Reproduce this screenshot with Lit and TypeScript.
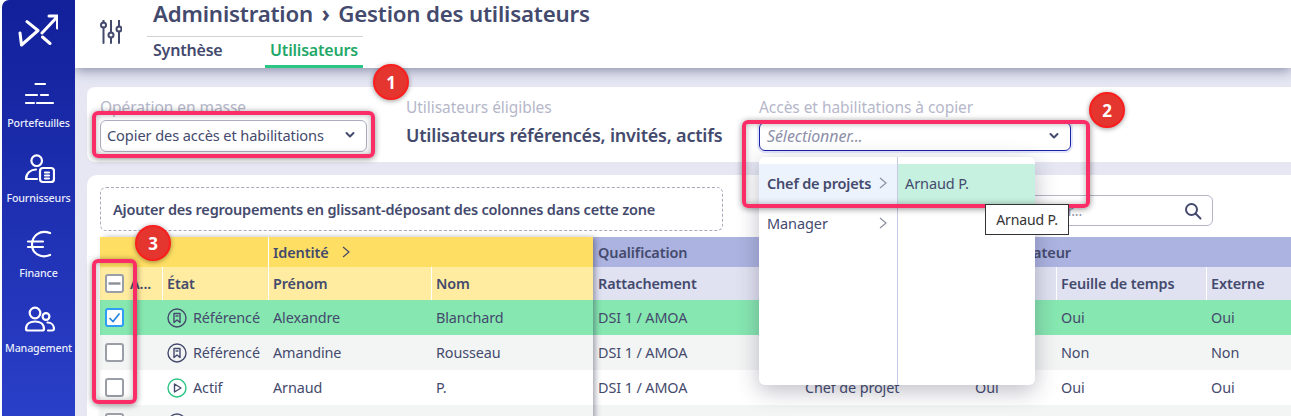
import { LitElement, html, css, svg } from "lit";
import { customElement } from "lit/decorators.js";

const navItems = [
  { label: "Portefeuilles", icon: svg`<path d="M12.5 6H22M3 17H14M18 17H25M3 25H11M14 25H30"/>` },
  { label: "Fournisseurs", icon: svg`<circle cx="13.7" cy="7.7" r="5.3"/><path d="M3 26C3 20 8 16.5 13 16.5M3 26H14"/><rect x="17" y="15" width="14" height="14" rx="3"/><path d="M22 19.5H26M22 22.5H26M22 25.5H26"/>` },
  { label: "Finance", icon: svg`<path d="M27 5C17 1 9 8 9 16.5C9 25 17 31 27 27M5 13.5H20M5 19H20"/>` },
  { label: "Management", icon: svg`<circle cx="12" cy="10" r="5.3"/><circle cx="23" cy="13.5" r="3.4"/><path d="M3 26C3 21 7 18.5 12 18.5C17 18.5 21 21 21 26C21 27 20 27.5 19 27.5H5C4 27.5 3 27 3 26Z"/><path d="M24.5 19.5C28 19.5 31 22 31 26C31 27 30 27.5 29 27.5H25"/>` },
];

type Row = { cls: string; check: "on" | "off"; state: "ref" | "act"; etat: string; prenom: string; nom: string; fn: string; a: string; f: string; e: string };
const rows: Row[] = [
  { cls: "sel", check: "on", state: "ref", etat: "Référencé", prenom: "Alexandre", nom: "Blanchard", fn: "Chef de projet", a: "Oui", f: "Oui", e: "Oui" },
  { cls: "alt", check: "off", state: "ref", etat: "Référencé", prenom: "Amandine", nom: "Rousseau", fn: "Manager", a: "Non", f: "Non", e: "Non" },
  { cls: "", check: "off", state: "act", etat: "Actif", prenom: "Arnaud", nom: "P.", fn: "Chef de projet", a: "Oui", f: "Oui", e: "Oui" },
  { cls: "alt", check: "off", state: "ref", etat: "Référencé", prenom: "Benoît", nom: "Lefèvre", fn: "Manager", a: "Oui", f: "Oui", e: "Non" },
];

const chevron = html`<svg class="chev" viewBox="0 0 12 8"><path d="M2.5 2L6 5.5L9.5 2"/></svg>`;
const gt = html`<svg class="gt" viewBox="0 0 10 14"><path d="M2 2L8 7L2 12"/></svg>`;

@customElement("app-root")
export class AppRoot extends LitElement {
  static styles = css`
    :host {
      display: block; width: 1291px; height: 416px; overflow: hidden; position: relative;
      background: #e6e7f3; color: #444a6d;
      font-family: "Noto Sans", "Liberation Sans", sans-serif; font-size: 14px; letter-spacing: -0.1px;
    }
    * { box-sizing: border-box; }
    .app { display: flex; height: 416px; background: #fff; }
    .side {
      margin-left: 2px; width: 73px; flex: none; border-top-left-radius: 7px; padding-top: 14px;
      background: linear-gradient(180deg, #12209a 0%, #2a3fc8 100%); color: #fff;
      display: flex; flex-direction: column; align-items: center; z-index: 3;
    }
    .logo { width: 40px; height: 34px; margin-bottom: 30px; flex: none; margin-left: -1px; }
    .logo svg { display: block; width: 40px; height: 34px; fill: none; stroke: #fff; stroke-width: 3; stroke-linecap: round; stroke-linejoin: round; }
    .nav { height: 75px; flex: none; display: flex; flex-direction: column; align-items: center; width: 100%; }
    .nav svg { width: 32px; height: 32px; fill: none; stroke: #fff; stroke-width: 2.2; stroke-linecap: round; stroke-linejoin: round; flex: none; }
    .nav span { font-size: 10.7px; line-height: 14px; margin-top: 6px; font-weight: 500; color: #e9ecfb; letter-spacing: -0.15px; }
    .main { flex: 1; min-width: 0; background: #e6e7f3; display: flex; flex-direction: column; }
    .head {
      height: 68px; flex: none; background: #fff; display: flex; padding-left: 25px; position: relative; z-index: 2;
      box-shadow: 0 2px 12px rgba(50, 52, 100, .55);
    }
    .sliders { width: 22px; height: 24px; margin-top: 20px; fill: none; stroke: #444a6d; stroke-width: 2; stroke-linecap: round; }
    .titles { margin-left: 25px; display: flex; flex-direction: column; width: 216px; }
    .title { font-size: 22.3px; font-weight: 600; line-height: 27px; white-space: nowrap; margin-left: 6px; height: 36px; letter-spacing: -0.2px; }
    .title i { font-style: normal; font-weight: 700; margin: 0 3px; }
    .tabs { display: flex; border-top: 1px solid #d2d2d2; height: 32px; }
    .tab { font-size: 16px; font-weight: 600; padding: 0 5px 0 6px; line-height: 27px; width: 118px; letter-spacing: -0.2px; }
    .tab.on { color: #1fa868; border-bottom: 3px solid #2bc584; width: 98px; text-align: center; padding: 0; }
    .content { flex: 1; min-height: 0; padding: 19px 0 0 12px; display: flex; flex-direction: column; gap: 13px; }
    .panel { background: #fff; border-radius: 8px 0 0 8px; padding: 0 13px; }
    .ops { height: 75px; display: grid; grid-template-columns: 306px 353px 312px; padding-top: 11px; flex: none; }
    .lab { font-size: 15.5px; line-height: 18px; color: #b5b7ca; white-space: nowrap; letter-spacing: -0.05px; }
    .sel-box {
      height: 32px; margin-top: 4px; border: 1px solid #aeb0c2; border-radius: 6px; display: flex; align-items: center;
      justify-content: space-between; padding: 0 10px 2px 6px; width: 267px; white-space: nowrap; font-size: 14.6px;
    }
    .chev { width: 12px; height: 8px; fill: none; stroke: #444a6d; stroke-width: 2; stroke-linecap: round; stroke-linejoin: round; }
    .val { font-size: 18px; font-weight: 600; line-height: 30px; margin-top: 4px; white-space: nowrap; letter-spacing: -0.2px; }
    .sel-box.focus { width: 312px; height: 29px; margin-top: 6px; border-color: #1a22a8; box-shadow: 0 0 0 2px #e4e6fa; padding-left: 7px; font-size: 16px; }
    .sel-box.focus em { color: #8d90a8; }
    .grid-panel { flex: 1; min-height: 0; padding-top: 12px; border-radius: 10px 0 0 0; }
    .bar { display: flex; justify-content: space-between; width: 1113px; height: 44px; }
    .zone { width: 623px; border: 1px dashed #a9a9bd; border-radius: 6px; display: flex; align-items: center; padding-left: 12px; font-weight: 600; white-space: nowrap; font-size: 14.5px; letter-spacing: -0.2px; }
    .search { width: 220px; height: 31px; margin-top: 8px; border: 1px solid #b4b5c8; border-radius: 6px; display: flex; align-items: center; justify-content: space-between; padding: 0 10px 0 6px; color: #8d90a8; }
    .search svg { width: 18px; height: 18px; fill: none; stroke: #444a6d; stroke-width: 2; stroke-linecap: round; }
    .table { display: flex; margin-top: 6px; width: 1192px; }
    .frozen, .rest { display: grid; flex: none; grid-template-rows: 30px 33px 35px 35px 35px 35px; }
    .frozen { grid-template-columns: 62px 106px 163px 162px; position: relative; z-index: 1; box-shadow: 3px 0 6px -1px rgba(40, 40, 70, .45); }
    .rest { grid-template-columns: 207px 170px 86px 150px 85px; }
    .c { padding: 0 5px; display: flex; align-items: center; white-space: nowrap; overflow: hidden; min-width: 0; }
    .g { font-weight: 600; font-size: 14.5px; }
    .g.y { background: #ffdf63; }
    .g.b { background: #acb3e0; }
    .g .gt { margin-left: 12px; }
    .ch { font-weight: 600; font-size: 14.4px; }
    .ch.y { background: #ffeca0; }
    .ch.b { background: #e0e2f1; }
    .sep { border-left: 1px solid #fff; padding-left: 4px; }
    .gsep { border-left: 1px solid #fff; padding-left: 4px; }
    .r { background: #fff; font-size: 14.4px; }
    .r.sel { background: #86e7b0; }
    .r.alt { background: #f3f5f4; }
    .etat { gap: 6px; }
    .st { width: 20px; height: 20px; flex: none; fill: none; stroke: #444a6d; stroke-width: 1.4; stroke-linejoin: round; }
    .st.g2 circle { stroke: #2bc584; }
    .box { width: 19px; height: 19px; border: 2px solid #9a9ea6; border-radius: 3px; background: #fff; flex: none; display: block; }
    .box svg { display: block; width: 15px; height: 15px; fill: none; stroke: #8a8e96; stroke-width: 2.4; }
    .box.on { border-color: #2f9cf5; }
    .box.on svg { stroke: #1f80e0; stroke-width: 1.6; }
    .gt { width: 10px; height: 14px; fill: none; stroke: #444a6d; stroke-width: 1.2; flex: none; }
    .menu {
      position: absolute; left: 759px; top: 157px; width: 276px; height: 228px; background: #fff; border-radius: 6px; z-index: 5;
      box-shadow: 0 6px 22px rgba(40, 40, 70, .3); display: flex; padding-top: 7px; 
    }
    .menu-l { width: 139px; border-right: 1px solid #c9cae6; margin-top: -7px; padding-top: 7px; }
    .menu-r { flex: 1; }
    .mi { height: 40px; display: flex; align-items: center; justify-content: space-between; padding: 0 9px 2px 8px; font-size: 14.5px; white-space: nowrap; }
    .mi .gt { stroke: #8d90a2; }
    .mi.on { background: #edf3fd; font-weight: 600; letter-spacing: -0.2px; }
    .mi.pick { background: #c6f0df; padding-left: 7px; }
    .tip { position: absolute; left: 985px; top: 204px; width: 84px; height: 31px; background: #fff; border: 1px solid #333; z-index: 7; color: #333; display: flex; align-items: center; justify-content: center; font-size: 14px; }
    .mark { position: absolute; border: 4px solid #fb2d66; border-radius: 6px; z-index: 6; box-shadow: 0 1px 6px rgba(0, 0, 0, .45), inset 0 0 6px rgba(0, 0, 0, .3); }
    .badge {
      position: absolute; width: 36px; height: 36px; border-radius: 50%; z-index: 6; background: #e4352f; border: 2px solid #fb1e1e;
      color: #fff; font-weight: 700; font-size: 17px; display: flex; align-items: center; justify-content: center;
      box-shadow: 0 1px 5px rgba(0, 0, 0, .4);
    }
  `;

  private cell(cls: string, content: unknown) {
    return html`<div class="c ${cls}">${content}</div>`;
  }

  private stateIcon(s: Row["state"]) {
    return s === "ref"
      ? html`<svg class="st" viewBox="0 0 20 20"><circle cx="10" cy="10" r="9"/><path d="M7 5.5H13V14.5L10 12L7 14.5Z"/><path d="M8.5 8H11.5"/></svg>`
      : html`<svg class="st g2" viewBox="0 0 20 20"><circle cx="10" cy="10" r="9"/><path d="M7.5 6L14 10L7.5 14Z"/></svg>`;
  }

  private box(kind: "on" | "off" | "mix") {
    return html`<span class="box ${kind}">
      ${kind === "on" ? html`<svg viewBox="0 0 15 15"><path d="M2.5 8L6 11.5L12.5 3.5"/></svg>` : ""}
      ${kind === "mix" ? html`<svg viewBox="0 0 15 15"><path d="M1.5 7.5H13.5"/></svg>` : ""}
    </span>`;
  }

  render() {
    return html`
      <div class="app">
        <aside class="side">
          <div class="logo"><svg viewBox="0 0 40 34"><path d="M9 7.7L20 16.5L3.5 31L2 19M24 19L39.5 2.5M31 2H39.5V14M24.5 23L32 29.5"/></svg></div>
          ${navItems.map((n) => html`<div class="nav"><svg viewBox="0 0 32 32">${n.icon}</svg><span>${n.label}</span></div>`)}
        </aside>
        <div class="main">
          <header class="head">
            <svg class="sliders" viewBox="0 0 22 24">
              <path d="M3.5 0V2.5M3.5 7.5V23M11 0V12.5M11 17.5V23M19 0V6.5M19 11.5V23"/>
              <circle cx="3.5" cy="5" r="2.5"/><circle cx="11" cy="15" r="2.5"/><circle cx="19" cy="9" r="2.5"/>
            </svg>
            <div class="titles">
              <div class="title">Administration <i>›</i> Gestion des utilisateurs</div>
              <nav class="tabs"><div class="tab">Synthèse</div><div class="tab on">Utilisateurs</div></nav>
            </div>
          </header>
          <div class="content">
            <section class="panel ops">
              <div><div class="lab">Opération en masse</div><div class="sel-box">Copier des accès et habilitations ${chevron}</div></div>
              <div><div class="lab">Utilisateurs éligibles</div><div class="val">Utilisateurs référencés, invités, actifs</div></div>
              <div><div class="lab">Accès et habilitations à copier</div><div class="sel-box focus"><em>Sélectionner...</em>${chevron}</div></div>
            </section>
            <section class="panel grid-panel">
              <div class="bar">
                <div class="zone">Ajouter des regroupements en glissant-déposant des colonnes dans cette zone</div>
                <div class="search"><span>Rechercher...</span><svg viewBox="0 0 18 18"><circle cx="7.5" cy="7.5" r="5.5"/><path d="M11.5 11.5L16.5 16.5"/></svg></div>
              </div>
              <div class="table">
                <div class="frozen">
                  <div class="c g y" style="grid-column: span 2"></div>
                  <div class="c g y gsep" style="grid-column: span 2">Identité ${gt}</div>
                  ${this.cell("ch y", html`${this.box("mix")}<span style="margin-left:6px">A...</span>`)}
                  ${this.cell("ch y sep", "État")}
                  ${this.cell("ch y sep", "Prénom")}
                  ${this.cell("ch y sep", "Nom")}
                  ${rows.map((r) => html`
                    ${this.cell(`r ${r.cls}`, this.box(r.check))}
                    ${this.cell(`r etat ${r.cls}`, html`${this.stateIcon(r.state)}<span>${r.etat}</span>`)}
                    ${this.cell(`r ${r.cls}`, r.prenom)}
                    ${this.cell(`r ${r.cls}`, r.nom)}
                  `)}
                </div>
                <div class="rest">
                  <div class="c g b" style="grid-column: span 2">Qualification</div>
                  <div class="c g b" style="grid-column: span 3">Collaborateur</div>
                  ${this.cell("ch b", "Rattachement")}
                  ${this.cell("ch b sep", "Fonction")}
                  ${this.cell("ch b sep", "Actif")}
                  ${this.cell("ch b sep", "Feuille de temps")}
                  ${this.cell("ch b sep", "Externe")}
                  ${rows.map((r) => html`
                    ${this.cell(`r ${r.cls}`, "DSI 1 / AMOA")}
                    ${this.cell(`r ${r.cls}`, r.fn)}
                    ${this.cell(`r ${r.cls}`, r.a)}
                    ${this.cell(`r ${r.cls}`, r.f)}
                    ${this.cell(`r ${r.cls}`, r.e)}
                  `)}
                </div>
              </div>
            </section>
          </div>
        </div>
      </div>
      <div class="menu">
        <div class="menu-l">
          <div class="mi on">Chef de projets ${gt}</div>
          <div class="mi">Manager ${gt}</div>
        </div>
        <div class="menu-r"><div class="mi pick">Arnaud P.</div></div>
      </div>
      <div class="mark" style="left:92px;top:111px;width:283px;height:47px"></div>
      <div class="mark" style="left:742px;top:120px;width:348px;height:88px"></div>
      <div class="mark" style="left:92px;top:259px;width:45px;height:145px"></div>
      <div class="badge" style="left:373px;top:64px">1</div>
      <div class="badge" style="left:1089px;top:92px">2</div>
      <div class="badge" style="left:135px;top:225px">3</div>
      <div class="tip">Arnaud P.</div>
    `;
  }
}
